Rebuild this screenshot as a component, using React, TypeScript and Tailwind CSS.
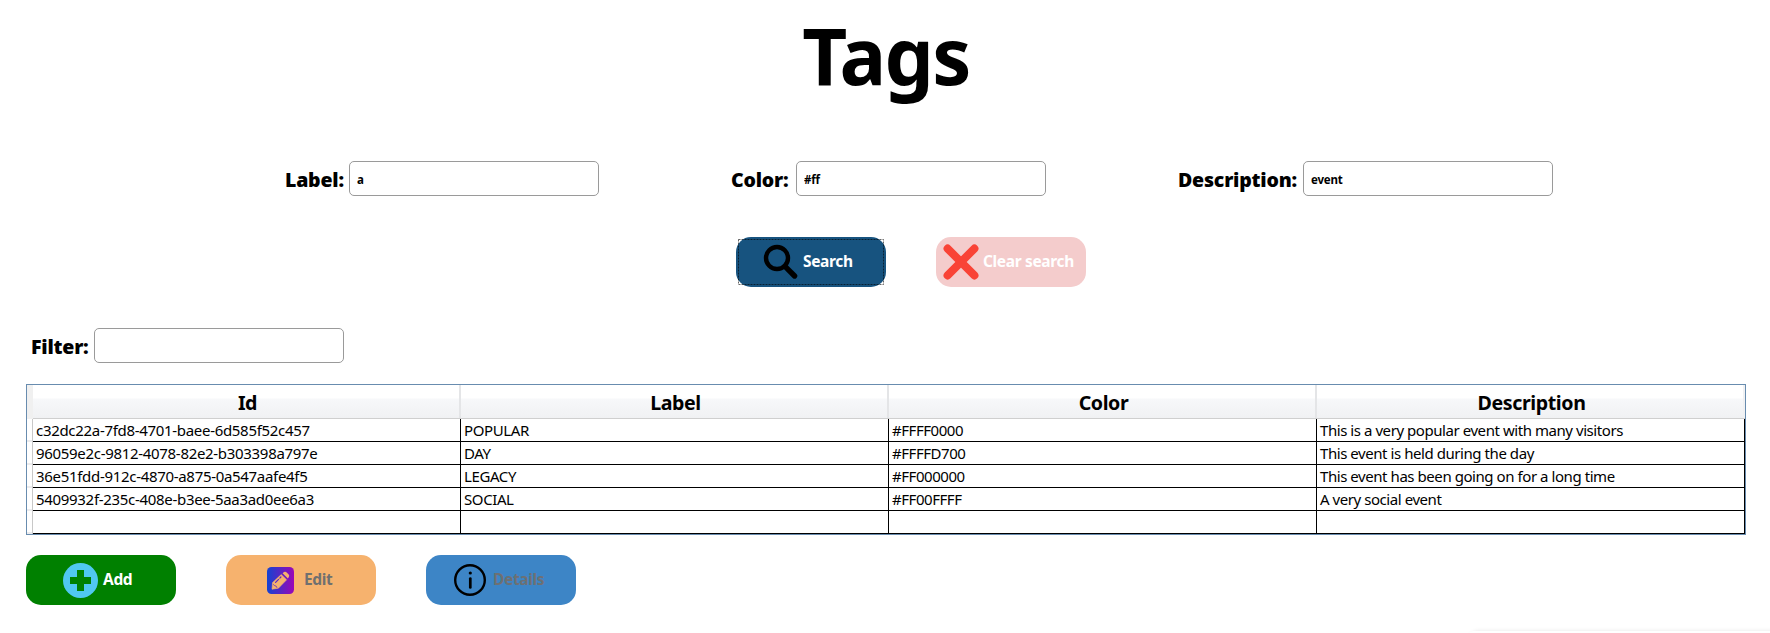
import type { ReactNode } from "react";

type Tag = { id: string; label: string; color: string; description: string };

const tags: Tag[] = [
  { id: "c32dc22a-7fd8-4701-baee-6d585f52c457", label: "POPULAR", color: "#FFFF0000", description: "This is a very popular event with many visitors" },
  { id: "96059e2c-9812-4078-82e2-b303398a797e", label: "DAY", color: "#FFFFD700", description: "This event is held during the day" },
  { id: "36e51fdd-912c-4870-a875-0a547aafe4f5", label: "LEGACY", color: "#FF000000", description: "This event has been going on for a long time" },
  { id: "5409932f-235c-408e-b3ee-5aa3ad0ee6a3", label: "SOCIAL", color: "#FF00FFFF", description: "A very social event" },
  { id: "", label: "", color: "", description: "" },
];

function Field({ label, value, labelClass }: { label: string; value?: string; labelClass: string }) {
  return (
    <label className="flex h-[35px] items-center">
      <span className={`pt-0.5 text-[19.5px] leading-6 font-black tracking-[-0.2px] whitespace-nowrap ${labelClass}`}>{label}</span>
      <input
        defaultValue={value}
        className="h-[35px] w-[250px] rounded-[5px] border border-[#9a9a9a] bg-white pt-px pl-[7px] text-[11.5px] font-bold tracking-[-0.2px] outline-none"
      />
    </label>
  );
}

function ActionButton({ className, textClass, icon, children }: { className: string; textClass: string; icon: ReactNode; children: ReactNode }) {
  return (
    <button className={`flex h-[50px] w-[150px] items-center rounded-[15px] ${className}`}>
      {icon}
      <span className={`pb-[3px] text-[15.5px] leading-6 font-bold tracking-[-0.35px] whitespace-nowrap ${textClass}`}>{children}</span>
    </button>
  );
}

function SearchIcon() {
  return (
    <svg className="size-9 shrink-0" viewBox="0 0 36 36" fill="none" stroke="#000">
      <circle cx="14" cy="14" r="11" strokeWidth="4.4" />
      <path d="M22 22.4 31.6 32" strokeWidth="5.4" strokeLinecap="round" />
    </svg>
  );
}

function CrossIcon() {
  return (
    <svg className="size-9 shrink-0" viewBox="0 0 36 36" fill="none" stroke="#f94336" strokeWidth="8">
      <path d="M4.6 4.6 31.4 31.4M31.4 4.6 4.6 31.4" strokeLinecap="round" />
    </svg>
  );
}

function PlusIcon() {
  return (
    <svg className="size-[35px] shrink-0" viewBox="0 0 35 35">
      <circle cx="17.5" cy="17.5" r="17.5" fill="#50c8f0" />
      <path d="M14 7h7v7h7v7h-7v7h-7v-7H7v-7h7z" fill="#008000" />
    </svg>
  );
}

function PencilIcon() {
  return (
    <svg className="size-[27px] shrink-0" viewBox="0 0 27 27">
      <defs>
        <linearGradient id="pencilTile" x1="0" x2="1" y1="0" y2="0">
          <stop offset="0" stopColor="#1443d2" />
          <stop offset="1" stopColor="#9b07b6" />
        </linearGradient>
      </defs>
      <rect width="27" height="27" rx="4.5" fill="url(#pencilTile)" />
      <g fill="#f6b26e">
        <path d="M5.6 15.6 14.2 7.6 19.6 12.8 11.4 21.2 5 22.2Z" stroke="#f6b26e" strokeWidth="0.6" strokeLinejoin="round" />
        <path d="M15.6 6.2 17 5.1q1.4-.8 2.7.3l2 2.1q1 1.3.1 2.6l-.9 1.4z" />
      </g>
      <path d="M8.6 15.3 13.9 10" stroke="#5a26c4" strokeWidth="1.2" strokeLinecap="round" strokeDasharray="4.2 1.8 4" />
      <path d="M6.2 17.4 7.6 18.6 9.2 19.2 10 20.8" fill="none" stroke="#5a26c4" strokeWidth="0.8" />
    </svg>
  );
}

function InfoIcon() {
  return (
    <svg className="size-8 shrink-0" viewBox="0 0 32 32" fill="none" stroke="#000">
      <circle cx="16" cy="16" r="14.8" strokeWidth="2.4" />
      <path d="M16.3 14.6v8.8" strokeWidth="2.7" strokeLinecap="round" />
      <circle cx="16.3" cy="9" r="1.6" fill="#000" stroke="none" />
    </svg>
  );
}

function HeaderCell({ children }: { children: ReactNode }) {
  return (
    <div className="flex h-[33px] w-[428px] items-center justify-center border-r-2 border-[#e4e5e7] bg-[linear-gradient(#fff_0,#fff_13px,#f7f8fa_14px,#f0f1f3_33px)] pt-0.5 pl-[3px] text-[19.6px] font-bold tracking-[-0.4px] last:border-[#f0f1f3]">
      {children}
    </div>
  );
}

function Cell({ children, tracking }: { children: ReactNode; tracking: string }) {
  return (
    <div className={`h-[23px] w-[428px] border-r border-b border-black pl-[3px] text-[15px] leading-[22px] whitespace-nowrap ${tracking}`}>
      {children}
    </div>
  );
}

export default function App() {
  return (
    <main className="flex h-[633px] w-[1770px] flex-col overflow-hidden bg-white font-['Noto_Sans',sans-serif] text-black">
      <h1 className="h-[161px] shrink-0 pt-[5px] pl-0.5 text-center text-[78px] leading-[100px] font-bold tracking-[-1.6px]">Tags</h1>

      <section className="flex gap-[132px] pl-[285px]">
        <Field label="Label:" value="a" labelClass="w-16" />
        <Field label="Color:" value="#ff" labelClass="w-[65px]" />
        <Field label="Description:" value="event" labelClass="w-[125px]" />
      </section>

      <section className="mt-[41px] flex gap-[50px] pl-[736px]">
        <div className="relative">
          <ActionButton className="gap-1 bg-[#17537f] pl-[27px]" textClass="text-white" icon={<SearchIcon />}>Search</ActionButton>
          <svg className="pointer-events-none absolute top-0 left-0 h-[50px] w-[150px]" viewBox="0 0 150 50">
            <rect x="2.5" y="2.5" width="145" height="45" fill="none" stroke="#000" strokeOpacity="0.6" strokeDasharray="2 1" />
          </svg>
        </div>
        <ActionButton className="gap-1 bg-[#f4cccc] pl-[7px]" textClass="text-white" icon={<CrossIcon />}>Clear search</ActionButton>
      </section>

      <section className="mt-[41px] pl-[31px]">
        <Field label="Filter:" labelClass="w-[63px]" />
      </section>

      <section className="mt-[21px] ml-[26px] flex h-[151px] w-[1720px] shrink-0 border border-[#688caf]">
        <div className="flex w-1.5 flex-col border-r border-[#c8c8c8]">
          <div className="h-[34px] w-1.5 bg-[#f0f0f0]" />
          {tags.map((_, i) => (
            <div key={i} className="h-[23px] border-b-2 border-[#ececee] bg-white" />
          ))}
        </div>
        <div className="flex-1">
          <div className="flex h-[34px] border-b border-[#cfcfcf]">
            <HeaderCell>Id</HeaderCell>
            <HeaderCell>Label</HeaderCell>
            <HeaderCell>Color</HeaderCell>
            <HeaderCell>Description</HeaderCell>
          </div>
          {tags.map((tag, i) => (
            <div key={i} className="flex">
              <Cell tracking="tracking-[-0.31px]">{tag.id}</Cell>
              <Cell tracking="tracking-[-0.4px]">{tag.label}</Cell>
              <Cell tracking="tracking-[-0.45px]">{tag.color}</Cell>
              <Cell tracking="tracking-[-0.44px]">{tag.description}</Cell>
            </div>
          ))}
        </div>
      </section>

      <section className="mt-5 ml-[26px] flex gap-[50px]">
        <ActionButton className="gap-[5px] bg-[#008000] pl-[37px]" textClass="text-white" icon={<PlusIcon />}>Add</ActionButton>
        <ActionButton className="gap-[10px] bg-[#f6b26e] pl-[41px]" textClass="text-[#6f7070]" icon={<PencilIcon />}>Edit</ActionButton>
        <ActionButton className="gap-[7px] bg-[#3d85c6] pl-[28px]" textClass="text-[#6d7073]" icon={<InfoIcon />}>Details</ActionButton>
      </section>

      <div className="mt-[26px] ml-[1466px] h-5 shrink-0 rounded-tl-lg bg-white shadow-[4px_0_4px_rgba(0,0,0,0.1)]" />
    </main>
  );
}
